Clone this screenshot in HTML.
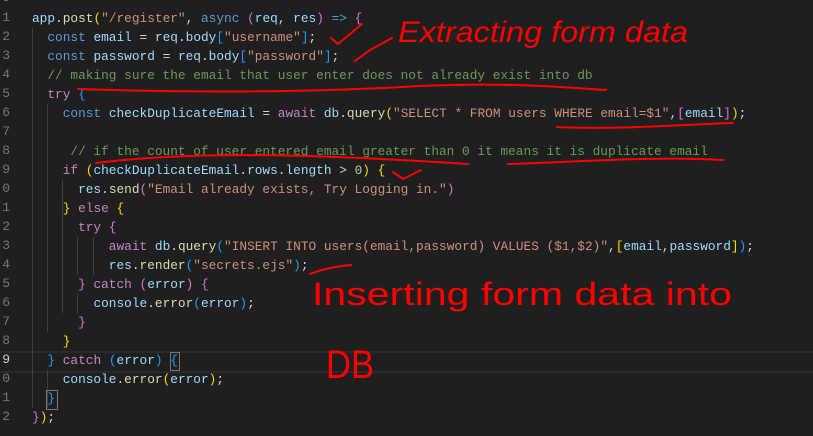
<!DOCTYPE html>
<html><head><meta charset="utf-8"><style>
html,body{margin:0;padding:0;background:#1f1f1f;width:813px;height:436px;overflow:hidden;position:relative}
.ln{position:absolute;left:-6px;width:16px;text-align:right;font:13px "Liberation Mono",monospace;color:#6e7681}
.code{position:absolute;left:32px;top:0;font:12.8px/19px "Liberation Mono",monospace;color:#d4d4d4;white-space:pre}
.l{height:19px;position:absolute;left:0}
.k{color:#569cd6}.v{color:#9cdcfe}.f{color:#dcdcaa}.s{color:#ce9178}.c{color:#6a9955}.p{color:#c586c0}
.g{color:#ffd700}.m{color:#da70d6}.b{color:#179fff}.w{color:#d4d4d4}
.guide{position:absolute;width:1px;background:#404040}
</style></head><body>
<div style="position:absolute;left:0;top:351px;width:813px;height:18px;border-top:2px solid #2a2a2a;border-bottom:2px solid #2a2a2a"></div>
<div class="guide" style="left:32px;top:28px;height:380px"></div>
<div class="guide" style="left:47px;top:104px;height:228px"></div>
<div class="guide" style="left:62px;top:180px;height:133px"></div>
<div class="guide" style="left:77px;top:237px;height:38px"></div>
<div class="guide" style="left:93px;top:237px;height:38px"></div>
<div class="guide" style="left:77px;top:294px;height:19px"></div>
<div class="guide" style="left:47px;top:370px;height:38px"></div>
<div style="position:absolute;left:46px;top:390px;width:10px;height:18px;border:1px solid #777"></div>
<div style="position:absolute;left:170px;top:352px;width:8px;height:17px;border:1px solid #777"></div>
<div class="code">
<div class="l" style="top:9px"><span class="v">app</span>.<span class="f">post</span><span class="g">(</span><span class="s">"/register"</span>, <span class="k">async</span> <span class="m">(</span><span class="v">req</span>, <span class="v">res</span><span class="m">)</span> <span class="k">=&gt;</span> <span class="m">{</span></div>
<div class="l" style="top:28px">  <span class="k">const</span> <span class="v">email</span> = <span class="v">req</span>.<span class="v">body</span><span class="b">[</span><span class="s">"username"</span><span class="b">]</span>;</div>
<div class="l" style="top:47px">  <span class="k">const</span> <span class="v">password</span> = <span class="v">req</span>.<span class="v">body</span><span class="b">[</span><span class="s">"password"</span><span class="b">]</span>;</div>
<div class="l c" style="top:66px">  // making sure the email that user enter does not already exist into db</div>
<div class="l" style="top:85px">  <span class="p">try</span> <span class="b">{</span></div>
<div class="l" style="top:104px">    <span class="k">const</span> <span class="v">checkDuplicateEmail</span> = <span class="p">await</span> <span class="v">db</span>.<span class="f">query</span><span class="g">(</span><span class="s">"SELECT * FROM users WHERE email=$1"</span>,<span class="m">[</span><span class="v">email</span><span class="m">]</span><span class="g">)</span>;</div>
<div class="l c" style="top:142px">     // if the count of user entered email greater than 0 it means it is duplicate email</div>
<div class="l" style="top:161px">    <span class="p">if</span> <span class="g">(</span><span class="v">checkDuplicateEmail</span>.<span class="v">rows</span>.<span class="v">length</span> &gt; <span style="color:#b5cea8">0</span><span class="g">)</span> <span class="g">{</span></div>
<div class="l" style="top:180px">      <span class="v">res</span>.<span class="f">send</span><span class="m">(</span><span class="s">"Email already exists, Try Logging in."</span><span class="m">)</span></div>
<div class="l" style="top:199px">    <span class="g">}</span> <span class="p">else</span> <span class="g">{</span></div>
<div class="l" style="top:218px">      <span class="p">try</span> <span class="m">{</span></div>
<div class="l" style="top:237px">          <span class="p">await</span> <span class="v">db</span>.<span class="f">query</span><span class="b">(</span><span class="s">"INSERT INTO users(email,password) VALUES ($1,$2)"</span>,<span class="g">[</span><span class="v">email</span>,<span class="v">password</span><span class="g">]</span><span class="b">)</span>;</div>
<div class="l" style="top:256px">          <span class="v">res</span>.<span class="f">render</span><span class="b">(</span><span class="s">"secrets.ejs"</span><span class="b">)</span>;</div>
<div class="l" style="top:275px">      <span class="m">}</span> <span class="p">catch</span> <span class="m">(</span><span class="v">error</span><span class="m">)</span> <span class="m">{</span></div>
<div class="l" style="top:294px">        <span class="v">console</span>.<span class="f">error</span><span class="b">(</span><span class="v">error</span><span class="b">)</span>;</div>
<div class="l" style="top:313px">      <span class="m">}</span></div>
<div class="l" style="top:332px">    <span class="g">}</span></div>
<div class="l" style="top:351px">  <span class="b">}</span> <span class="p">catch</span> <span class="b">(</span><span class="v">error</span><span class="b">)</span> <span class="b">{</span></div>
<div class="l" style="top:370px">    <span class="v">console</span>.<span class="f">error</span><span class="g">(</span><span class="v">error</span><span class="g">)</span>;</div>
<div class="l" style="top:389px">  <span class="b">}</span></div>
<div class="l" style="top:408px"><span class="m">}</span><span class="g">)</span>;</div>
</div>
<div class="ln" style="top:-10px">5</div><div class="ln" style="top:10px">1</div><div class="ln" style="top:29px">2</div><div class="ln" style="top:48px">3</div><div class="ln" style="top:67px">4</div><div class="ln" style="top:86px">5</div><div class="ln" style="top:105px">6</div><div class="ln" style="top:124px">7</div><div class="ln" style="top:143px">8</div><div class="ln" style="top:162px">9</div><div class="ln" style="top:181px">0</div><div class="ln" style="top:200px">1</div><div class="ln" style="top:219px">2</div><div class="ln" style="top:238px">3</div><div class="ln" style="top:257px">4</div><div class="ln" style="top:276px">5</div><div class="ln" style="top:295px">6</div><div class="ln" style="top:314px">7</div><div class="ln" style="top:333px">8</div><div class="ln" style="top:352px;color:#ccc">9</div><div class="ln" style="top:371px">0</div><div class="ln" style="top:390px">1</div><div class="ln" style="top:409px">2</div>
<svg width="813" height="436" style="position:absolute;left:0;top:0" fill="none" stroke="#f00" stroke-width="2" stroke-linecap="round" stroke-linejoin="round">
<path d="M331 38 L338 44 L362 24"/>
<path d="M355 61 L370 50 L392 38"/>
<path d="M78 89 C200 93 320 92 420 86 C520 82 570 88 606 90"/>
<path d="M557 127 C620 130 690 124 733 123"/>
<path d="M96 163 C200 150 330 155 468 164"/>
<path d="M508 164 C580 162 650 156 723 160"/>
<path d="M393 172 L403 179 L421 170"/>
<path d="M310 274 C325 268 340 266 351 265"/>
<text x="398" y="42" fill="#f00" stroke="none" font-family="Liberation Sans, sans-serif" font-size="30" textLength="290" lengthAdjust="spacingAndGlyphs" font-style="italic">Extracting form data</text>
<text x="312" y="305" fill="#f00" stroke="none" font-family="Liberation Sans, sans-serif" font-size="32" textLength="420" lengthAdjust="spacingAndGlyphs">Inserting form data into</text>
<text x="326" y="378" fill="#f00" stroke="none" font-family="Liberation Sans, sans-serif" font-size="40" textLength="48" lengthAdjust="spacingAndGlyphs">DB</text>
</svg>
</body></html>
